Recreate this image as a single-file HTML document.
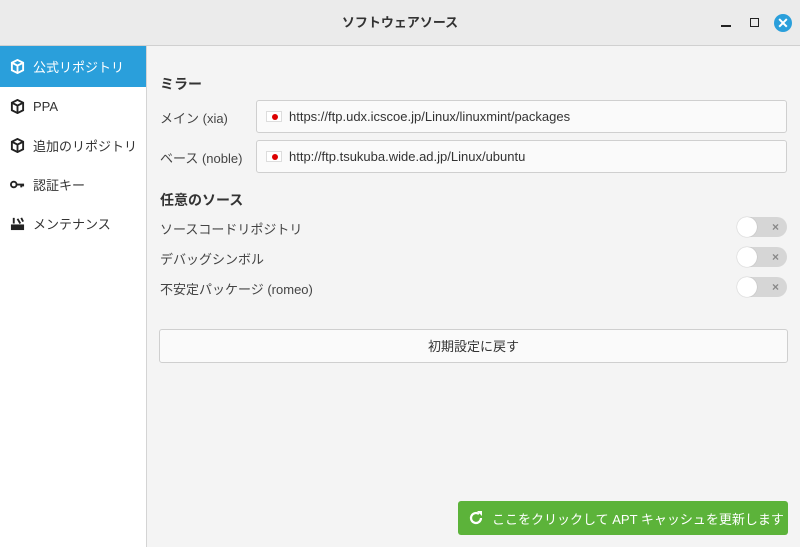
<!DOCTYPE html>
<html><head><meta charset="utf-8"><style>
*{box-sizing:border-box;margin:0;padding:0}
body{width:800px;height:547px;overflow:hidden;background:#f4f4f4;font-family:"Liberation Sans","Noto Sans CJK JP",sans-serif;font-size:13px;color:#333;position:relative}
.title{position:absolute;left:0;top:0;width:800px;height:46px;background:#ebebeb;border-bottom:1px solid #d0d0d0;text-align:center;line-height:46px;font-weight:bold;font-size:13px;color:#333}
.side{position:absolute;left:0;top:46px;width:147px;height:501px;background:#fff;border-right:1px solid #d4d4d4}
.it{height:39px;display:flex;align-items:center;padding-left:10px;font-size:13px;color:#333}
.it svg{margin-right:8px}
.it.sel{background:#2a9fdb;color:#fff;height:41px}
.abs{position:absolute}
h3{position:absolute;font-size:14px;font-weight:bold;color:#333}
.lbl{position:absolute;left:160px;font-size:13px;color:#444}
.entry{position:absolute;left:256px;width:531px;height:33px;background:#fafafa;border:1px solid #cfcfcf;border-radius:3px;display:flex;align-items:center;padding-left:9px;font-size:13px;color:#333}
.flag{width:16px;height:11px;background:#fff;border:1px solid #ddd;margin-right:7px;position:relative}
.flag:after{content:"";position:absolute;left:5px;top:2px;width:6px;height:6px;border-radius:50%;background:#d00}
.sw{position:absolute;left:737px;width:50px;height:20px;border-radius:10px;background:#d6d6d6}
.sw:before{content:"";position:absolute;left:0;top:0;width:20px;height:20px;border-radius:50%;background:#fff;box-shadow:0 0 1px #999}
.sw:after{content:"×";position:absolute;right:8px;top:0;line-height:20px;font-size:12px;color:#888;font-weight:bold}
.btn{position:absolute;left:159px;top:329px;width:629px;height:34px;border:1px solid #cfcfcf;border-radius:3px;background:#fafafa;text-align:center;line-height:34px;font-size:13px}
.go{position:absolute;left:458px;top:501px;width:330px;height:34px;background:#5cb33a;border-radius:3px;color:#fff;display:flex;align-items:center;padding-left:10px;font-size:13px;white-space:nowrap}
</style></head><body>
<div class="title">ソフトウェアソース</div>
<div class="abs" style="left:721px;top:25px;width:10px;height:1.5px;background:#222"></div>
<div class="abs" style="left:750px;top:18px;width:9px;height:9px;border:1.5px solid #222"></div>
<div class="abs" style="left:774px;top:14px;width:18px;height:18px;border-radius:50%;background:#2a9fdb;color:#fff;text-align:center;line-height:18px;font-weight:bold;font-size:14px">✕</div>
<div class="side">
<div class="it sel"><svg width="15" height="15" viewBox="0 0 16 16"><path d="M8 1L14 4V12L8 15L2 12V4Z" fill="none" stroke="#fff" stroke-width="2"/><path d="M2 4L8 7L14 4M8 7V15" stroke="#fff" stroke-width="2" fill="none"/></svg>公式リポジトリ</div>
<div class="it"><svg width="15" height="15" viewBox="0 0 16 16"><path d="M8 1L14 4V12L8 15L2 12V4Z" fill="none" stroke="#222" stroke-width="2"/><path d="M2 4L8 7L14 4M8 7V15" stroke="#222" stroke-width="2" fill="none"/></svg>PPA</div>
<div class="it"><svg width="15" height="15" viewBox="0 0 16 16"><path d="M8 1L14 4V12L8 15L2 12V4Z" fill="none" stroke="#222" stroke-width="2"/><path d="M2 4L8 7L14 4M8 7V15" stroke="#222" stroke-width="2" fill="none"/></svg>追加のリポジトリ</div>
<div class="it"><svg width="15" height="15" viewBox="0 0 16 16"><circle cx="4" cy="8" r="3" fill="none" stroke="#222" stroke-width="2"/><path d="M7 8H15M12 8V11M14 8V10" stroke="#222" stroke-width="2"/></svg>認証キー</div>
<div class="it"><svg width="15" height="15" viewBox="0 0 16 16"><path d="M1 9H15V15H1Z" fill="#222"/><path d="M4 2V8M8 3L11 8M12 2L14 6" stroke="#222" stroke-width="2"/></svg>メンテナンス</div>
</div>
<h3 style="left:160px;top:74px">ミラー</h3>
<div class="lbl" style="top:108px">メイン (xia)</div>
<div class="entry" style="top:100px"><span class="flag"></span>https://ftp.udx.icscoe.jp/Linux/linuxmint/packages</div>
<div class="lbl" style="top:148px">ベース (noble)</div>
<div class="entry" style="top:140px"><span class="flag"></span>http://ftp.tsukuba.wide.ad.jp/Linux/ubuntu</div>
<h3 style="left:160px;top:190px">任意のソース</h3>
<div class="lbl" style="top:219px">ソースコードリポジトリ</div><div class="sw" style="top:217px"></div>
<div class="lbl" style="top:249px">デバッグシンボル</div><div class="sw" style="top:247px"></div>
<div class="lbl" style="top:279px">不安定パッケージ (romeo)</div><div class="sw" style="top:277px"></div>
<div class="btn">初期設定に戻す</div>
<div class="go"><svg width="16" height="16" viewBox="0 0 16 16" style="margin-right:8px"><path d="M13 8A5 5 0 1 1 11 4" fill="none" stroke="#fff" stroke-width="2.2"/><path d="M9 1H14V6Z" fill="#fff"/></svg>ここをクリックして APT キャッシュを更新します</div>
</body></html>
